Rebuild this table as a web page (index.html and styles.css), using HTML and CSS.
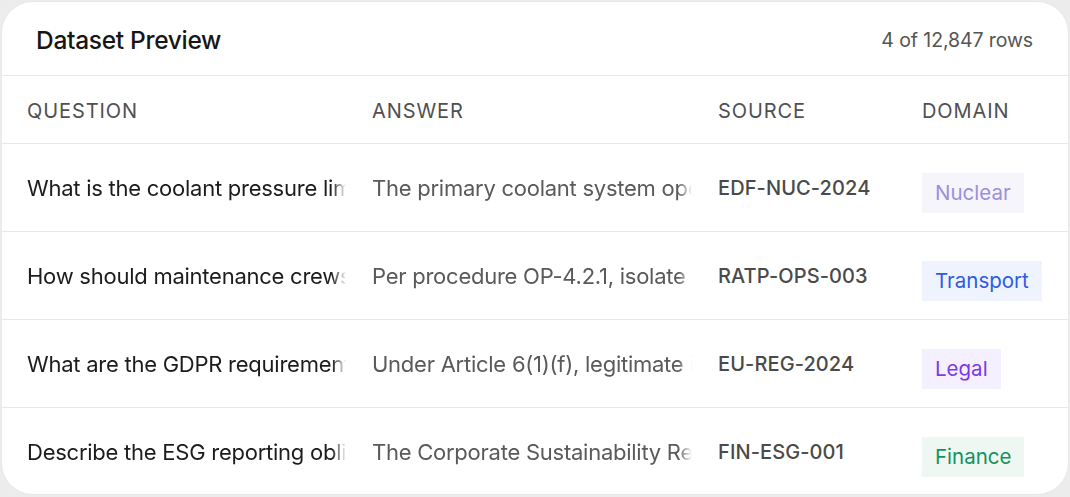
FILE: index.html
```html
<!DOCTYPE html>
<html lang="en">
<head>
<meta charset="utf-8">
<title>Dataset Preview</title>
<link rel="stylesheet" href="styles.css">
</head>
<body>
<div class="card">
  <div class="card-head">
    <h1 class="title">Dataset Preview</h1>
    <span class="count">4 of 12,847 rows</span>
  </div>
  <div class="row head-row">
    <div class="cell th">Question</div>
    <div class="cell th">Answer</div>
    <div class="cell th">Source</div>
    <div class="cell th">Domain</div>
  </div>
  <div class="row">
    <div class="cell q">What is the coolant pressure limit for reactor unit 3 during startup?</div>
    <div class="cell a">The primary coolant system operating pressure must not exceed 155 bar.</div>
    <div class="cell src">EDF-NUC-2024</div>
    <div class="cell dom"><span class="badge nuclear">Nuclear</span></div>
  </div>
  <div class="row">
    <div class="cell q">How should maintenance crews isolate the traction power?</div>
    <div class="cell a">Per procedure OP-4.2.1, isolate the traction supply before access.</div>
    <div class="cell src">RATP-OPS-003</div>
    <div class="cell dom"><span class="badge transport">Transport</span></div>
  </div>
  <div class="row">
    <div class="cell q">What are the GDPR requirements for legitimate interest processing?</div>
    <div class="cell a">Under Article 6(1)(f), legitimate interest requires a balancing test.</div>
    <div class="cell src">EU-REG-2024</div>
    <div class="cell dom"><span class="badge legal">Legal</span></div>
  </div>
  <div class="row last">
    <div class="cell q">Describe the ESG reporting obligations under CSRD.</div>
    <div class="cell a">The Corporate Sustainability Reporting Directive requires disclosure.</div>
    <div class="cell src">FIN-ESG-001</div>
    <div class="cell dom"><span class="badge finance">Finance</span></div>
  </div>
</div>
</body>
</html>
```

FILE: styles.css
```css
* { box-sizing: border-box; }
html, body { margin: 0; padding: 0; }
body {
  background: #ececec;
  font-family: Inter, "Noto Sans", "Liberation Sans", sans-serif;
  width: 1070px;
  height: 497px;
  padding: 1px 1px 2px 1px;
}
.card {
  background: #fff;
  border: 1px solid #e8e8e8;
  border-radius: 32px;
  height: 494px;
  overflow: hidden;
}
.card-head {
  height: 74px;
  display: flex;
  align-items: center;
  justify-content: space-between;
  padding: 2px 35px 0 34px;
  border-bottom: 1px solid #e8e8e8;
}
.title {
  margin: 0;
  font-size: 24.5px;
  font-weight: 500;
  color: #161616;
  letter-spacing: -0.3px;
}
.count {
  font-size: 19.5px;
  color: #555;
  letter-spacing: -0.1px;
}
.row {
  display: grid;
  grid-template-columns: 319px 320px 178px 1fr;
  column-gap: 26px;
  padding: 0 0 0 25px;
  height: 88px;
  align-items: center;
  border-bottom: 1px solid #e8e8e8;
}
.row.head-row { height: 68px; padding-top: 3px; }
.row.last { border-bottom: none; }
.cell {
  white-space: nowrap;
  overflow: hidden;
}
.q, .a {
  -webkit-mask-image: linear-gradient(to right, #000 calc(100% - 14px), transparent);
  mask-image: linear-gradient(to right, #000 calc(100% - 14px), transparent);
}
.th {
  font-size: 20px;
  text-transform: uppercase;
  letter-spacing: 0.9px;
  color: #505050;
  font-weight: 400;
}
.q {
  font-size: 22px;
  color: #1c1c1c;
  letter-spacing: -0.25px;
}
.a {
  font-size: 22px;
  color: #5a5a5a;
  letter-spacing: -0.25px;
}
.src {
  font-size: 20px;
  color: #4a4a4a;
  font-weight: 450;
  letter-spacing: 0.1px;
}
.dom { overflow: visible; }
.badge {
  display: inline-block;
  font-size: 20.5px;
  padding: 0 13px;
  line-height: 40px;
  height: 40px;
  margin-top: 10px;
}
.nuclear { background: #f6f5fc; color: #9a8fe0; }
.transport { background: #eef3fe; color: #2c5ce6; }
.legal { background: #f5f0ff; color: #7a3ae8; }
.finance { background: #eef7f2; color: #16925c; }
```
